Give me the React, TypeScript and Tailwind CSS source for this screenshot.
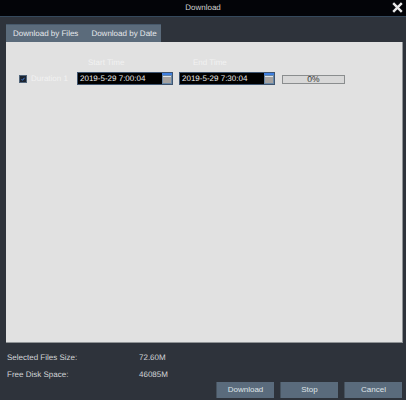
import React from 'react';

const DateField = ({ value }: { value: string }) => (
  <div className="flex h-[13px] w-[96px] border border-[#3f5570] bg-black">
    <span className="flex-1 whitespace-nowrap pl-[2px] text-[8px] leading-[12px] text-[#ececec]">{value}</span>
    <span className="flex w-[10px] flex-col bg-[#6a88a6]">
      <span className="h-[2px] bg-[#3f7fe0]" />
      <span className="mx-[1px] mt-[1px] h-[7px] border-t border-[#dfe4e8] bg-[#a5a2a0]" />
    </span>
  </div>
);

const ActionButton = ({ label }: { label: string }) => (
  <button className="h-[16px] w-[58px] border-l border-[#46525e] bg-[#5a6b7c] text-[8px] text-[#dfe3e7]">
    {label}
  </button>
);

export default function App() {
  return (
    <div className="flex h-[400px] w-[406px] flex-col overflow-hidden bg-[#2e333b] [font-family:'Liberation_Sans',Arial,sans-serif] [text-rendering:geometricPrecision]">
      <div className="relative flex h-[17px] shrink-0 items-center justify-center border-b border-[#35495c] bg-[#030408] text-[8px] text-[#d4d4d4]">
        Download
        <svg className="absolute right-[3px] top-[2px]" width="11" height="11" viewBox="0 0 11 11">
          <path d="M1.2 1.2L9.8 9.8M9.8 1.2L1.2 9.8" stroke="#e8e8e8" strokeWidth="2.4" />
        </svg>
      </div>

      <div className="ml-[6px] mt-[7px] flex h-[18px] w-[155px] shrink-0 items-center gap-[13px] whitespace-nowrap border-t border-[#46586a] bg-[#5b6b7b] pl-[7px] text-[8px] text-[#e6e9ec]">
        <span>Download by Files</span>
        <span>Download by Date</span>
      </div>

      <div className="ml-[6px] mr-[3px] h-[301px] shrink-0 border-b border-r border-[#8f9396] bg-[#e1e1e1] pl-[13px] pt-[15px]">
        <div className="ml-[69px] flex text-[8px] leading-[11px] text-[#f2f2f2]">
          <span className="w-[105px]">Start Time</span>
          <span>End Time</span>
        </div>
        <div className="mt-[4px] flex items-center">
          <span className="flex h-[8px] w-[8px] items-center justify-center border border-[#51657a] bg-[#1c2430]">
            <svg width="4" height="4" viewBox="0 0 4 4">
              <path d="M0.5 2.5L1.5 3.2L3.5 0.8" stroke="#3f7fe0" strokeWidth="1" fill="none" />
            </svg>
          </span>
          <span className="ml-[4px] w-[46px] whitespace-nowrap text-[8px] text-[#f2f2f2]">Duration 1</span>
          <DateField value="2019-5-29 7:00:04" />
          <span className="w-[6px]" />
          <DateField value="2019-5-29 7:30:04" />
          <div className="ml-[7px] mt-[2px] flex h-[9px] w-[63px] items-center justify-center border border-[#8a8d8e] bg-[#d8d8d8] text-[8.5px] leading-none text-[#333]">
            0%
          </div>
        </div>
      </div>

      <div className="flex h-[39px] flex-col gap-[7px] pl-[7px] pt-[10px] text-[8px] leading-[10px] text-[#d2d5d8]">
        <div className="flex">
          <span className="w-[132px]">Selected Files Size:</span>
          <span>72.60M</span>
        </div>
        <div className="flex">
          <span className="w-[132px]">Free Disk Space:</span>
          <span>46085M</span>
        </div>
      </div>

      <div className="flex justify-end gap-[6px] pr-[4px]">
        <ActionButton label="Download" />
        <ActionButton label="Stop" />
        <ActionButton label="Cancel" />
      </div>
    </div>
  );
}
